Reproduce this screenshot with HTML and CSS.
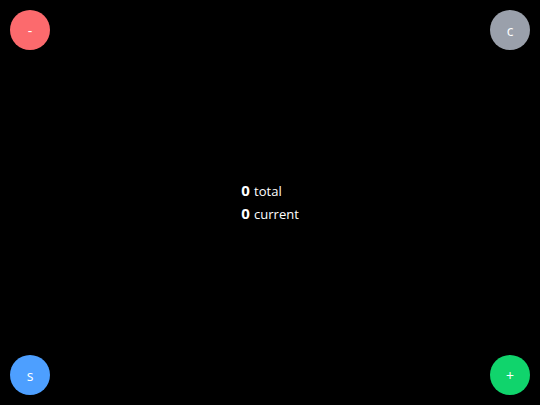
FILE: index.html
```html
<!DOCTYPE html>
<html>
<head>
<meta charset="utf-8">
<link rel="stylesheet" href="styles.css">
</head>
<body>
<div class="screen">
  <div class="row">
    <button class="btn red">-</button>
    <button class="btn grey">c</button>
  </div>
  <div class="stats">
    <div class="line"><b>0</b> total</div>
    <div class="line"><b>0</b> current</div>
  </div>
  <div class="row">
    <button class="btn blue">s</button>
    <button class="btn green">+</button>
  </div>
</div>
</body>
</html>
```
FILE: styles.css
```css
html, body {
  margin: 0;
  padding: 0;
  background: #000;
}
.screen {
  box-sizing: border-box;
  width: 540px;
  height: 405px;
  padding: 10px;
  display: flex;
  flex-direction: column;
  justify-content: space-between;
  font-family: "Open Sans", sans-serif;
  color: #fff;
}
.row {
  display: flex;
  justify-content: space-between;
}
.btn {
  width: 40px;
  height: 40px;
  border-radius: 50%;
  border: none;
  padding: 0;
  margin: 0;
  color: #fff;
  font-family: "Open Sans", sans-serif;
  font-size: 14px;
  display: flex;
  align-items: center;
  justify-content: center;
}
.red { background: #fc6a6d; }
.grey { background: #9aa0ab; }
.blue { background: #4d9fff; }
.green { background: #10d46c; }
.stats {
  align-self: center;
  font-size: 13px;
  line-height: 23px;
}
.line {
  height: 23px;
}
.line b {
  font-size: 15px;
  font-weight: 700;
  line-height: 1;
  margin-right: 1px;
}
```
